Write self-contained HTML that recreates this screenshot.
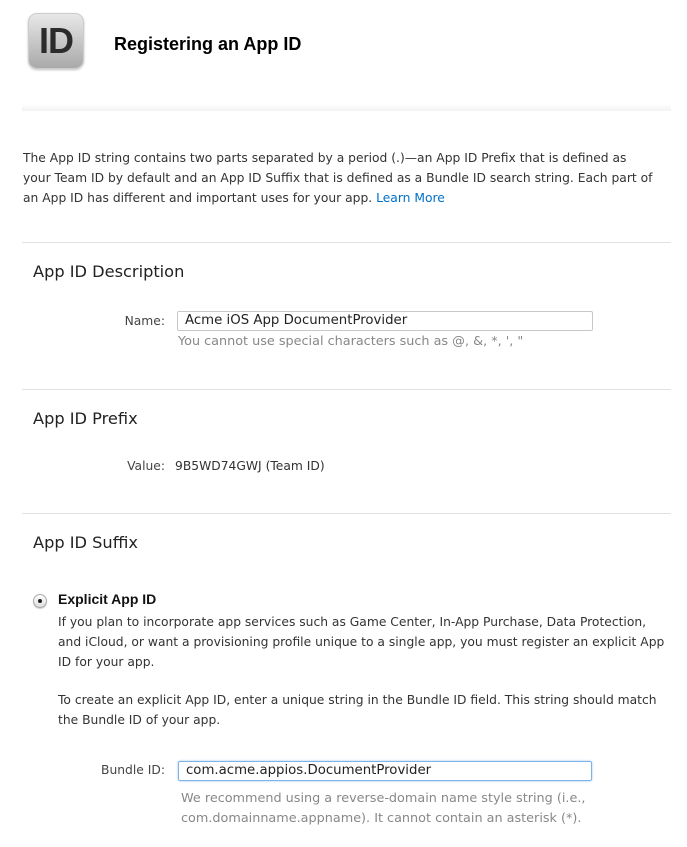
<!DOCTYPE html>
<html><head><style>
body{margin:0;width:687px;height:847px;background:#fff;font-family:"DejaVu Sans","Liberation Sans",sans-serif;font-size:12.3px;color:#333;position:relative;overflow:hidden}
.a{position:absolute;white-space:nowrap}
.icon{left:28px;top:13px;width:56px;height:56px;border-radius:9px;background:linear-gradient(#e8e8e8,#a9a9a9);border:1px solid #ccc;box-sizing:border-box;box-shadow:0 1px 2px rgba(0,0,0,.25);font-family:"Liberation Sans",sans-serif;font-weight:bold;font-size:36px;color:#2b2b2b;text-align:center;line-height:54px;letter-spacing:-1px}
.title{left:114px;top:34px;font-family:"Liberation Sans",sans-serif;font-weight:bold;font-size:18px;color:#000}
.hr{position:absolute;left:22px;width:649px;height:1px;background:#e2e2e2}
.h{left:33px;font-size:16.2px;color:#222}
.txt{left:23px;line-height:20px}
.g{color:#888;font-size:12.8px}
.inp{position:absolute;height:20px;border:1px solid #c8c8c8;border-radius:2px;box-sizing:border-box;padding-left:7px;line-height:18px;font-size:13.3px;color:#222}
</style></head><body>
<div class="a icon">ID</div>
<div class="a title">Registering an App ID</div>
<div style="position:absolute;left:22px;top:104px;width:649px;height:7px;background:linear-gradient(#fff,#f2f2f2)"></div>
<div class="a txt" style="top:148px">The App ID string contains two parts separated by a period (.)—an App ID Prefix that is defined as<br>your Team ID by default and an App ID Suffix that is defined as a Bundle ID search string. Each part of<br>an App ID has different and important uses for your app. <span style="color:#0070c9">Learn More</span></div>
<div class="hr" style="top:242px"></div>
<div class="a h" style="top:262px">App ID Description</div>
<div class="a" style="right:522px;top:314px;color:#444">Name:</div>
<div class="inp" style="left:177px;top:311px;width:416px">Acme iOS App DocumentProvider</div>
<div class="a g" style="left:178px;top:334px">You cannot use special characters such as @, &amp;, *, ', "</div>
<div class="hr" style="top:389px"></div>
<div class="a h" style="top:409px">App ID Prefix</div>
<div class="a" style="right:522px;top:459px;color:#444">Value:</div>
<div class="a" style="left:175px;top:459px">9B5WD74GWJ (Team ID)</div>
<div class="hr" style="top:513px"></div>
<div class="a h" style="top:533px">App ID Suffix</div>
<div class="a" style="left:33px;top:594px;width:14px;height:14px;border-radius:50%;border:1px solid #aaa;box-sizing:border-box;background:linear-gradient(#fff,#ddd);box-shadow:0 1px 1px rgba(0,0,0,.2)"><div style="position:absolute;left:4px;top:4px;width:4px;height:4px;border-radius:50%;background:#222"></div></div>
<div class="a" style="left:58px;top:591px;font-weight:bold;color:#111;font-family:'Liberation Sans',sans-serif;font-size:14px">Explicit App ID</div>
<div class="a" style="left:58px;top:612px;line-height:20px">If you plan to incorporate app services such as Game Center, In-App Purchase, Data Protection,<br>and iCloud, or want a provisioning profile unique to a single app, you must register an explicit App<br>ID for your app.</div>
<div class="a" style="left:58px;top:690px;line-height:20px">To create an explicit App ID, enter a unique string in the Bundle ID field. This string should match<br>the Bundle ID of your app.</div>
<div class="a" style="right:522px;top:763px;color:#444">Bundle ID:</div>
<div class="inp" style="left:178px;top:761px;width:414px;border-color:#7fb2e5;box-shadow:0 0 2px #9cc4ee">com.acme.appios.DocumentProvider</div>
<div class="a g" style="left:181px;top:789px;line-height:20px">We recommend using a reverse-domain name style string (i.e.,<br>com.domainname.appname). It cannot contain an asterisk (*).</div>
</body></html>
